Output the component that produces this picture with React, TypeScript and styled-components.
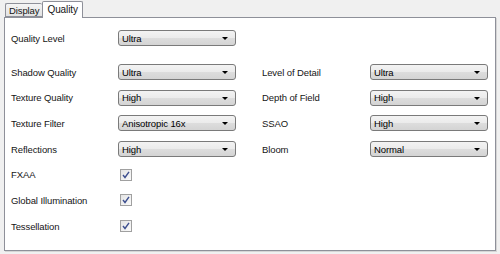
import React from 'react'
import styled, { createGlobalStyle } from 'styled-components'

const GlobalStyle = createGlobalStyle`
  html, body {
    margin: 0;
    background: #f0f0f0;
  }
  body {
    font-family: "Liberation Sans", Arial, sans-serif;
    font-size: 9.5px;
    letter-spacing: -0.1px;
    color: #151515;
  }
`

const Window = styled.div`
  width: 500px;
  height: 254px;
  padding: 1px 4px 0 4px;
  box-sizing: border-box;
`

const TabBar = styled.div`
  display: flex;
  align-items: flex-end;
  height: 16px;
  padding-left: 1px;
  position: relative;
  z-index: 1;
`

const Tab = styled.div<{ $active?: boolean }>`
  box-sizing: border-box;
  height: ${p => (p.$active ? '17px' : '14px')};
  padding: ${p => (p.$active ? '2px 4px 0 4px' : '1px 3px 0 3px')};
  margin-bottom: ${p => (p.$active ? '-1px' : '0')};
  border: 1px solid #8e9099;
  border-bottom: ${p => (p.$active ? 'none' : '1px solid #8e9099')};
  border-right: ${p => (p.$active ? '1px solid #8e9099' : 'none')};
  border-radius: 2px 2px 0 0;
  background: ${p => (p.$active ? '#fff' : 'linear-gradient(#f4f4f4, #e2e2e2)')};
  font-size: ${p => (p.$active ? '10px' : '9.5px')};
  line-height: 12px;
`

const Panel = styled.div`
  height: 234px;
  box-sizing: border-box;
  background: #fff;
  border: 1px solid #8e9099;
  box-shadow: 1px 1px 0 #d5d5d5;
  padding: 12px 0 0 6px;
`

const Form = styled.div<{ $last?: boolean }>`
  display: grid;
  grid-template-columns: 107px 118px 26px 108px 118px;
  grid-auto-rows: 16px;
  row-gap: 9.7px;
  align-items: center;
  margin-bottom: ${p => (p.$last ? '0' : '18px')};
`

const Label = styled.div<{ $col: number }>`
  grid-column: ${p => p.$col};
  white-space: nowrap;
`

const SelectBox = styled.div<{ $col: number }>`
  grid-column: ${p => p.$col};
  height: 16px;
  box-sizing: border-box;
  border: 1px solid #7a7a7a;
  border-radius: 3px;
  background: linear-gradient(#f3f3f3 0%, #ebebeb 50%, #dddddd 51%, #d4d4d4 100%);
  display: flex;
  align-items: center;
  justify-content: space-between;
  padding: 0 7px 0 3px;
  color: #000;
`

const Arrow = styled.span`
  width: 0;
  height: 0;
  border-left: 3px solid transparent;
  border-right: 3px solid transparent;
  border-top: 3px solid #000;
  margin-top: 1px;
`

const CheckBox = styled.div`
  grid-column: 2;
  width: 12px;
  height: 12px;
  margin-left: 2px;
  box-sizing: border-box;
  border: 1px solid #a0a0a0;
  background: linear-gradient(135deg, #e4e4e4, #fafafa);
  display: flex;
  align-items: center;
  justify-content: center;
`

const Select = ({ col, value }: { col: number; value: string }) => (
  <SelectBox $col={col}>
    <span>{value}</span>
    <Arrow />
  </SelectBox>
)

const Check = () => (
  <CheckBox>
    <svg width="8" height="8" viewBox="0 0 8 8">
      <path d="M1 4 L3 6.5 L7 0.8" fill="none" stroke="#3d4f8f" strokeWidth="1.4" />
    </svg>
  </CheckBox>
)

const pairs: [string, string, string, string][] = [
  ['Shadow Quality', 'Ultra', 'Level of Detail', 'Ultra'],
  ['Texture Quality', 'High', 'Depth of Field', 'High'],
  ['Texture Filter', 'Anisotropic 16x', 'SSAO', 'High'],
  ['Reflections', 'High', 'Bloom', 'Normal'],
]

const toggles = ['FXAA', 'Global Illumination', 'Tessellation']

export default function App() {
  return (
    <>
      <GlobalStyle />
      <Window>
        <TabBar>
          <Tab>Display</Tab>
          <Tab $active>Quality</Tab>
        </TabBar>
        <Panel>
          <Form>
            <Label $col={1}>Quality Level</Label>
            <Select col={2} value="Ultra" />
          </Form>
          <Form $last>
            {pairs.map(([l1, v1, l2, v2]) => (
              <React.Fragment key={l1}>
                <Label $col={1}>{l1}</Label>
                <Select col={2} value={v1} />
                <Label $col={4}>{l2}</Label>
                <Select col={5} value={v2} />
              </React.Fragment>
            ))}
            {toggles.map(t => (
              <React.Fragment key={t}>
                <Label $col={1}>{t}</Label>
                <Check />
              </React.Fragment>
            ))}
          </Form>
        </Panel>
      </Window>
    </>
  )
}
